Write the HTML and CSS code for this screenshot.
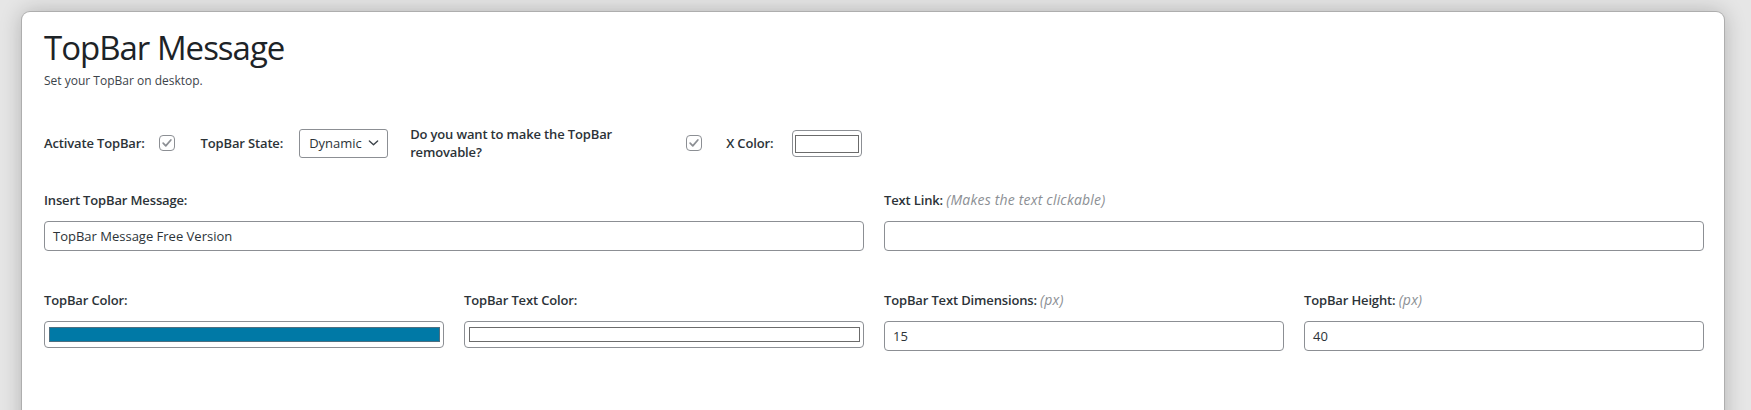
FILE: index.html
```html
<!DOCTYPE html>
<html lang="en">
<head>
<meta charset="utf-8">
<title>TopBar Message</title>
<link rel="stylesheet" href="styles.css">
</head>
<body>
<div class="card">
  <header class="head">
    <h1 class="title">TopBar Message</h1>
    <p class="subtitle">Set your TopBar on desktop.</p>
  </header>

  <div class="toolbar">
    <div class="group g-activate">
      <span class="lbl lbl-inline">Activate TopBar:</span>
      <span class="check"><svg viewBox="0 0 16 16" width="16" height="16"><path d="M3.6 8.2 L6.6 11.2 L12.4 4.6" fill="none" stroke="#8c8f94" stroke-width="2" stroke-linecap="round" stroke-linejoin="round"/></svg></span>
    </div>
    <div class="group g-state">
      <span class="lbl lbl-inline lbl-state">TopBar State:</span>
      <span class="select">Dynamic<svg class="chev" viewBox="0 0 12 8" width="12" height="8"><path d="M1.5 1.8 L6 6 L10.5 1.8" fill="none" stroke="#3c434a" stroke-width="1.5" stroke-linecap="round" stroke-linejoin="round"/></svg></span>
    </div>
    <div class="group g-remove">
      <span class="lbl lbl-inline lbl-wrap">Do you want to make the TopBar removable?</span>
      <span class="check"><svg viewBox="0 0 16 16" width="16" height="16"><path d="M3.6 8.2 L6.6 11.2 L12.4 4.6" fill="none" stroke="#8c8f94" stroke-width="2" stroke-linecap="round" stroke-linejoin="round"/></svg></span>
    </div>
    <div class="group g-xcolor">
      <span class="lbl lbl-inline lbl-x">X Color:</span>
      <span class="color color-small"><span class="swatch swatch-white"></span></span>
    </div>
  </div>

  <div class="fields">
    <div class="field span2">
      <label class="lbl">Insert TopBar Message:</label>
      <div class="input">TopBar Message Free Version</div>
    </div>
    <div class="field span2">
      <label class="lbl">Text Link: <em class="hint">(Makes the text clickable)</em></label>
      <div class="input"></div>
    </div>
    <div class="field">
      <label class="lbl">TopBar Color:</label>
      <div class="color"><span class="swatch swatch-blue"></span></div>
    </div>
    <div class="field">
      <label class="lbl">TopBar Text Color:</label>
      <div class="color"><span class="swatch swatch-white"></span></div>
    </div>
    <div class="field">
      <label class="lbl">TopBar Text Dimensions: <em class="hint">(px)</em></label>
      <div class="input">15</div>
    </div>
    <div class="field">
      <label class="lbl">TopBar Height: <em class="hint">(px)</em></label>
      <div class="input">40</div>
    </div>
  </div>
</div>
</body>
</html>
```

FILE: styles.css
```css
* { box-sizing: border-box; }

html, body {
  margin: 0;
  height: 100%;
  overflow: hidden;
}

body {
  background: #e6e6e6;
  padding: 12px 27px 0 22px;
  font-family: "Open Sans", "Noto Sans", sans-serif;
  color: #1d2327;
}

.card {
  background: #fff;
  border-radius: 8px;
  min-height: 440px;
  padding: 16px 20px 0 22px;
  box-shadow: 0 0 0 1px #aeaeae, 0 0 22px rgba(0, 0, 0, 0.24);
}

.head { margin: 0; }

.title {
  margin: 0;
  font-size: 33px;
  line-height: 40px;
  font-weight: 400;
  letter-spacing: -1px;
  color: #1d2327;
}

.subtitle {
  margin: 4px 0 0;
  font-size: 12px;
  line-height: 18px;
  color: #3c434a;
}

.toolbar {
  display: flex;
  align-items: center;
  margin-top: 35px;
  height: 36px;
}

.group {
  display: flex;
  align-items: center;
}

.g-activate { margin-right: 26px; }
.g-state { margin-right: 22px; }
.g-remove { margin-right: 24px; }

.lbl {
  display: block;
  font-size: 13px;
  line-height: 20px;
  font-weight: 600;
  letter-spacing: -0.15px;
  color: #2c3338;
}

.lbl-inline { margin-right: 14px; }
.lbl-state { margin-right: 16px; }
.lbl-x { margin-right: 19px; }

.lbl-wrap {
  width: 262px;
  line-height: 18px;
}

.hint {
  font-size: 14px;
  font-weight: 400;
  font-style: italic;
  letter-spacing: 0.2px;
  color: #8c8f94;
}

.check {
  display: inline-flex;
  width: 16px;
  height: 16px;
  border: 1px solid #8c8f94;
  border-radius: 4px;
  align-items: center;
  justify-content: center;
  background: #fff;
}

.check svg {
  width: 14px;
  height: 14px;
}

.select {
  display: flex;
  align-items: center;
  justify-content: space-between;
  width: 89px;
  height: 29px;
  padding: 0 8px 0 9px;
  border: 1px solid #8c8f94;
  border-radius: 3px;
  font-size: 13px;
  color: #2c3338;
}

.chev { width: 11px; height: 8px; }

.fields {
  display: grid;
  grid-template-columns: repeat(4, 1fr);
  column-gap: 20px;
  row-gap: 39px;
  margin-top: 29px;
}

.span2 { grid-column: span 2; }

.field .lbl { margin-bottom: 11px; }

.input {
  height: 30px;
  border: 1px solid #8c8f94;
  border-radius: 4px;
  padding: 0 8px;
  font-size: 13px;
  line-height: 28px;
  color: #2c3338;
}

.color {
  display: flex;
  height: 27px;
  border: 1px solid #8c8f94;
  border-radius: 4px;
  padding: 5px 3px 5px 4px;
}

.color-small {
  width: 70px;
  height: 27px;
  padding: 4px 2px 3px 2px;
}

.swatch {
  display: block;
  flex: 1;
  border: 1px solid #6b6b6b;
}

.swatch-white { background: #fff; }
.swatch-blue { background: #0079a6; border-color: #4d6f80; }
```
